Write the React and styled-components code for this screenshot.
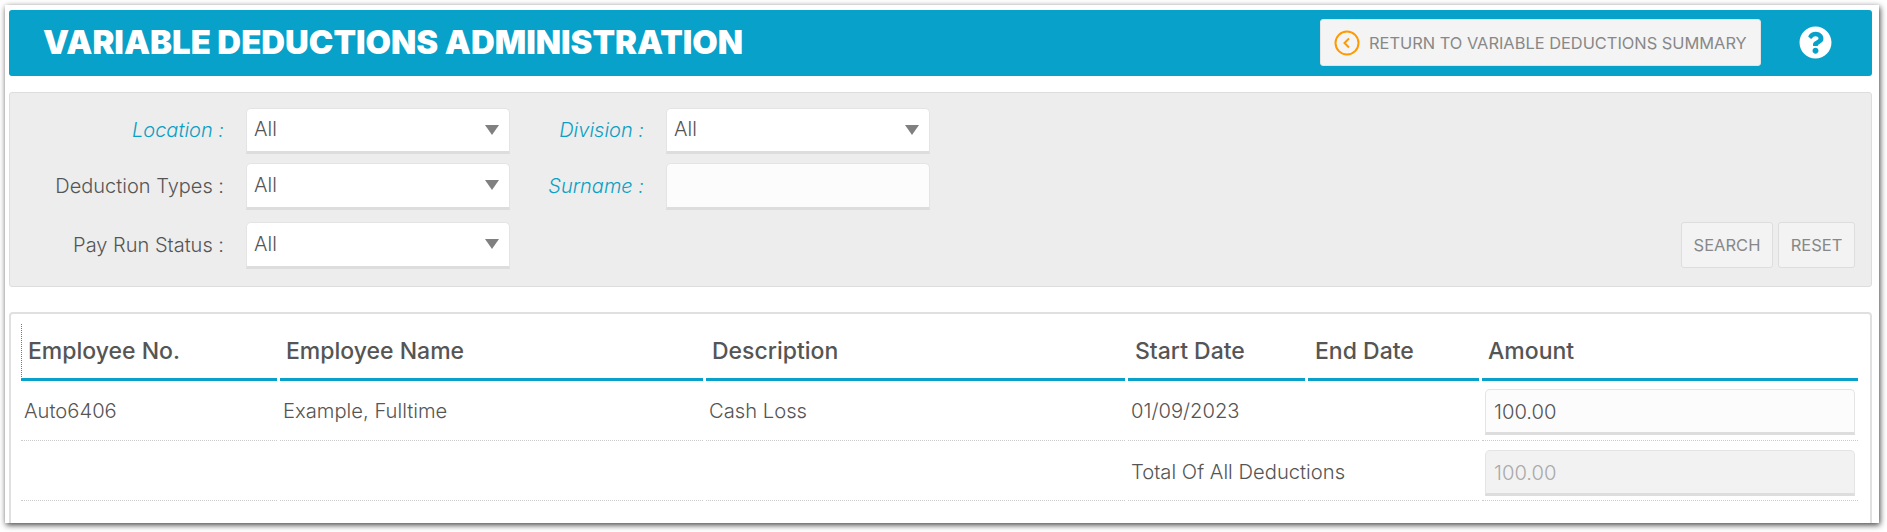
import React from 'react';
import styled, { createGlobalStyle } from 'styled-components';
import { FaQuestionCircle } from 'react-icons/fa';

const GlobalStyle = createGlobalStyle`
html, body {
    margin: 0;
    padding: 0;
    background: #fff;
    font-family: Inter, "Liberation Sans", sans-serif;
}
* {
    box-sizing: border-box;
}
`;

const columns = [256, 423, 419, 177, 171, 376];

const App = () => {
    return (
        <Page>
            <GlobalStyle />
            <Frame>
                <Header>
                    <Title>VARIABLE DEDUCTIONS ADMINISTRATION</Title>
                    <ReturnBtn>
                        <svg width="26" height="26" viewBox="0 0 26 26" fill="none" stroke="#f90">
                            <circle cx="13" cy="13" r="11.5" strokeWidth="2" />
                            <path d="M15 8.5 L10.5 13 L15 17.5" strokeWidth="2" />
                        </svg>
                        RETURN TO VARIABLE DEDUCTIONS SUMMARY
                    </ReturnBtn>
                    <HelpIcon><FaQuestionCircle size={33} /></HelpIcon>
                </Header>

                <Filters>
                    <FilterRow>
                        <Label accent>Location :</Label>
                        <Select />
                        <Label accent second>Division :</Label>
                        <Select />
                    </FilterRow>
                    <FilterRow gap={9}>
                        <Label>Deduction Types :</Label>
                        <Select />
                        <Label accent second>Surname :</Label>
                        <TextBox type="text" />
                    </FilterRow>
                    <FilterRow gap={12}>
                        <Label>Pay Run Status :</Label>
                        <Select />
                        <Buttons>
                            <FilterBtn wide>SEARCH</FilterBtn>
                            <FilterBtn>RESET</FilterBtn>
                        </Buttons>
                    </FilterRow>
                </Filters>

                <Card>
                    <Table>
                        <colgroup>
                            {columns.map((w, i) => <col key={i} width={w} />)}
                        </colgroup>
                        <thead>
                            <tr>
                                <Th first>Employee No.</Th>
                                <Th>Employee Name</Th>
                                <Th>Description</Th>
                                <Th>Start Date</Th>
                                <Th>End Date</Th>
                                <Th>Amount</Th>
                            </tr>
                        </thead>
                        <tbody>
                            <tr>
                                <Td>Auto6406</Td>
                                <Td>Example, Fulltime</Td>
                                <Td>Cash Loss</Td>
                                <Td>01/09/2023</Td>
                                <Td />
                                <AmountCell><AmountInput type="text" defaultValue="100.00" /></AmountCell>
                            </tr>
                            <tr>
                                <Td />
                                <Td />
                                <Td />
                                <Td last><Nowrap>Total Of All Deductions</Nowrap></Td>
                                <Td />
                                <AmountCell last><AmountInput type="text" defaultValue="100.00" disabled /></AmountCell>
                            </tr>
                        </tbody>
                    </Table>
                </Card>
            </Frame>
        </Page>
    );
};

const Select = () => (
    <SelectWrap>
        <SelectBox defaultValue="All">
            <option>All</option>
        </SelectBox>
    </SelectWrap>
);

export default App;




const Page = styled.div`
width: 1887px;
height: 532px;
padding: 5px 8px 9px 5px;
overflow: hidden;
background: #fff;
`;

const Frame = styled.div`
height: 518px;
padding: 5px 7px 0 4px;
background: #fff;
box-shadow: 1px 2px 6px rgba(0, 0, 0, 0.75);
overflow: hidden;
`;

const Header = styled.div`
display: flex;
align-items: center;
height: 66px;
padding: 0 0 0 34px;
background: #08a1c9;
border-radius: 3px;
`;

const Title = styled.h1`
flex: 1;
margin: 0;
padding-bottom: 2px;
color: #fff;
font-size: 32.9px;
font-weight: 900;
line-height: 1;
white-space: nowrap;
`;

const ReturnBtn = styled.button`
display: flex;
align-items: center;
gap: 9px;
width: 441px;
height: 47px;
margin-bottom: 1px;
padding: 0 0 0 13px;
border: 1px solid #e4e4e4;
border-radius: 3px;
background: #f4f4f4;
color: #888;
font-family: inherit;
font-size: 16.4px;
white-space: nowrap;
`;

const HelpIcon = styled.div`
display: flex;
width: 111px;
padding: 0 0 2px 38px;
color: #fff;
`;

const Filters = styled.div`
height: 195px;
margin-top: 16px;
padding: 15px 16px 0 0;
background: #ededed;
border: 1px solid #ddd;
border-radius: 3px;
`;

const FilterRow = styled.div`
display: flex;
align-items: center;
height: ${props => props.gap ? '47px' : '46px'};
margin-top: ${props => props.gap || 0}px;
`;

const Label = styled.label`
flex: none;
width: ${props => props.second ? '134px' : '214px'};
margin-right: 22px;
padding-bottom: 2px;
text-align: right;
font-size: 20px;
font-weight: 300;
font-style: ${props => props.accent ? 'italic' : 'normal'};
color: ${props => props.accent ? '#0a9fc4' : '#555'};
`;

const SelectWrap = styled.div`
position: relative;
flex: none;
width: 264px;
height: 100%;

&::after{
    content: '';
    position: absolute;
    top: 17px;
    right: 11px;
    border-left: 7.5px solid transparent;
    border-right: 7.5px solid transparent;
    border-top: 10px solid #808080;
    pointer-events: none;
}
`;

const SelectBox = styled.select`
display: block;
width: 100%;
height: 100%;
padding: 0 30px 2px 7px;
appearance: none;
outline: none;
background: #fff;
border: 1px solid #e4e4e4;
border-bottom: 3px solid #ddd;
border-radius: 5px 5px 0 0;
color: #555;
font-family: inherit;
font-size: 20px;
font-weight: 300;
`;

const TextBox = styled.input`
flex: none;
width: 264px;
height: 100%;
outline: none;
background: #fcfcfc;
border: 1px solid #e4e4e4;
border-bottom: 3px solid #ddd;
border-radius: 5px 5px 0 0;
`;

const Buttons = styled.div`
display: flex;
gap: 5px;
margin-left: auto;
height: 46px;
align-self: flex-start;
`;

const FilterBtn = styled.button`
width: ${props => props.wide ? '92px' : '77px'};
padding: 0;
background: #f3f3f3;
border: 1px solid #ddd;
border-radius: 3px;
color: #888;
font-family: inherit;
font-size: 16.5px;
`;

const Card = styled.div`
height: 240px;
margin-top: 25px;
padding: 10px 9px 0 7px;
background: #fff;
border: 2px solid #e0e0e0;
border-radius: 4px;
`;

const Table = styled.table`
width: 1843px;
table-layout: fixed;
border-collapse: separate;
border-spacing: 3px 0;
color: #555;
`;

const Th = styled.th`
height: 57px;
padding: 0 0 0 6px;
text-align: left;
vertical-align: middle;
font-size: 23px;
font-weight: 500;
color: #555;
border-bottom: 3px solid #08a1c9;
border-left: ${props => props.first ? '1px dotted #08a1c9' : 'none'};

&:nth-child(4), &:nth-child(5){
    padding-left: 7px;
}
`;

const Td = styled.td`
height: 60px;
padding: ${props => props.last ? '2px' : '0'} 3px 0;
font-size: 20.2px;
font-weight: 300;
border-bottom: 1px dotted #ccc;
`;

const AmountCell = styled(Td)`
vertical-align: top;
padding-top: ${props => props.last ? '9px' : '8px'};
`;

const Nowrap = styled.span`
white-space: nowrap;
`;

const AmountInput = styled.input`
display: block;
width: 370px;
height: 46px;
padding: 0 8px;
outline: none;
background: ${props => props.disabled ? '#f2f2f2' : '#fcfcfc'};
border: 1px solid #e4e4e4;
border-bottom: 3px solid #ddd;
border-radius: 5px 5px 0 0;
color: ${props => props.disabled ? '#aaa' : '#555'};
font-family: inherit;
font-size: 20.2px;
font-weight: 300;
`;
